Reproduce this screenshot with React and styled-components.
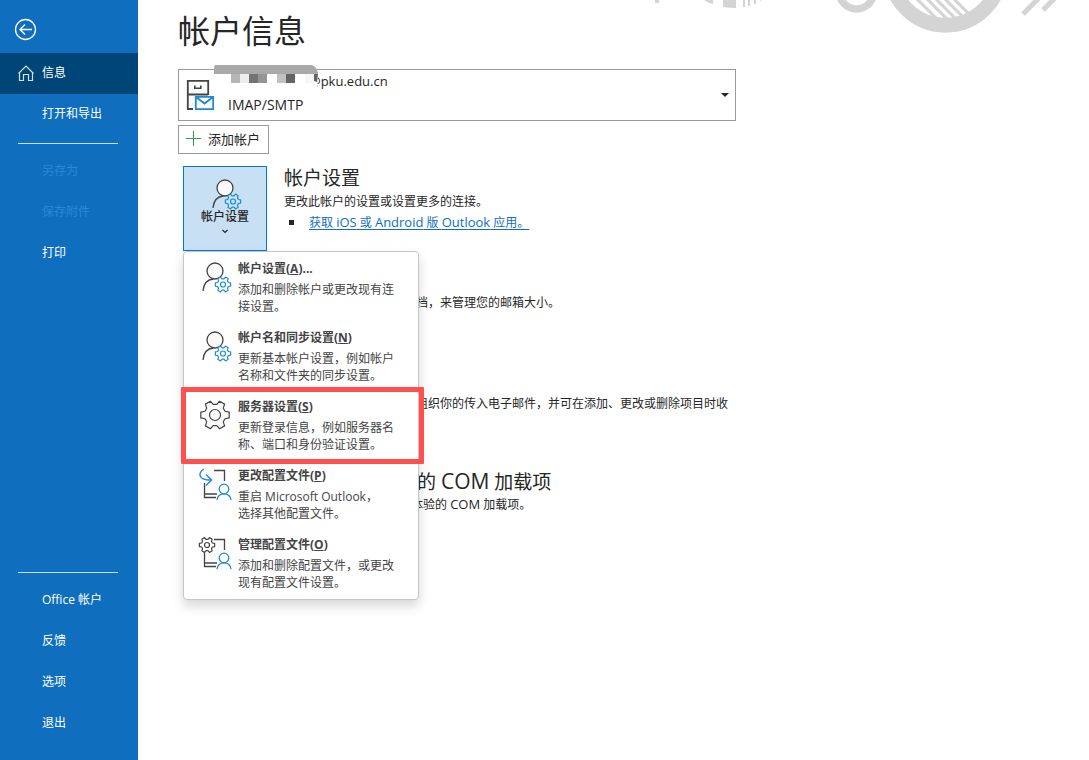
import React from 'react'
import styled, { createGlobalStyle, css } from 'styled-components'

const GlobalStyle = createGlobalStyle`
  * {
    box-sizing: border-box;
  }

  body {
    margin: 0;
    background: #fff;
    color: #262626;
    font-family: 'Open Sans', 'Noto Sans CJK SC', sans-serif;
    font-size: 12px;
    line-height: 17px;
  }

  button, select {
    font-family: inherit;
    color: inherit;
  }

  h1, h2, p, ul {
    margin: 0;
    padding: 0;
    font-weight: 400;
  }
`

const Page = styled.div`
  display: flex;
  min-height: 100vh;
`

const Sidebar = styled.nav`
  flex: 0 0 138px;
  display: flex;
  flex-direction: column;
  padding-bottom: 16px;
  background: #106ebe;
  color: #fff;
`

const BackButton = styled.button`
  align-self: flex-start;
  display: flex;
  height: 53px;
  padding: 18px 14px 0;
  background: none;
  border: none;
  color: #fff;
`

const NavItem = styled.button`
  display: flex;
  align-items: center;
  gap: ${({ $icon }) => ($icon ? '8px' : '4px')};
  height: 41px;
  padding: 0 0 2px ${({ $icon }) => ($icon ? '18px' : '42px')};
  background: ${({ $active }) => ($active ? '#004578' : 'none')};
  border: none;
  color: #fff;
  font-size: 12px;
  line-height: 17px;
  text-align: left;

  &:disabled {
    color: #2b88d8;
  }
`

const Divider = styled.hr`
  width: 100px;
  height: 1px;
  margin: 8px 0 7px 18px;
  border: none;
  background: #c7e0f4;
`

const NavFooter = styled.div`
  display: flex;
  flex-direction: column;
  margin-top: auto;
`

const Main = styled.main`
  position: relative;
  flex: 1;
  min-width: 0;
  padding: 9px 40px 40px;
`

const Decoration = styled.svg`
  position: absolute;
  top: 0;
  right: 0;
`

// latin words run one step larger than the chinese text around them
const Latin = styled.span`
  font-size: ${({ $size }) => $size || '13px'};
`

const Title = styled.h1`
  margin-bottom: 16px;
  font-size: 32px;
  line-height: 44px;
`

const AccountBox = styled.div`
  display: flex;
  align-items: center;
  max-width: 558px;
  height: 52px;
  padding: 0 6px 0 7px;
  border: 1px solid #999;
`

const AccountText = styled.div`
  flex: 1;
  display: flex;
  flex-direction: column;
  gap: 4px;
  margin-left: 14px;
  padding-bottom: 4px;
  font-size: 13px;
  line-height: 20px;
`

const Address = styled.label`
  position: relative;
  padding-left: 81px;
`

const Mask = styled.svg`
  position: absolute;
  left: -14px;
  top: -6px;
`

const AccountSelect = styled.select`
  appearance: none;
  height: 20px;
  padding: 0;
  background: none;
  border: none;
  font-size: 14px;
  line-height: 20px;
`

const AddButton = styled.button`
  display: flex;
  align-items: center;
  gap: 6px;
  height: 29px;
  margin: 4px 0 12px;
  padding: 0 8px 2px 7px;
  background: #fff;
  border: 1px solid #999;
  font-size: 13px;
  line-height: 20px;

  svg {
    margin-top: 1px;
  }
`

const Section = styled.section`
  display: flex;
  gap: 17px;
  height: 101px;
  padding-left: 5px;
`

const SectionTools = styled.div`
  position: relative;
  flex: 0 0 84px;
`

const SectionBody = styled.div`
  flex: 1;
  padding-left: ${({ $inset }) => $inset || 0};
  white-space: nowrap;
`

const SectionTitle = styled.h2`
  height: 27px;
  padding-left: ${({ $inset }) => $inset || 0};
  font-size: 19px;
  line-height: 24px;
`

const TileButton = styled.button`
  display: flex;
  flex-direction: column;
  align-items: center;
  width: 84px;
  height: 85px;
  padding: 12px 0 0;
  background: #c7e0f4;
  border: 1px solid #0078d7;
  font-size: 12px;
  font-weight: 500;
  line-height: 13px;
`

const LinkList = styled.ul`
  list-style: none;
  padding-left: 5px;

  li {
    display: flex;
    align-items: center;
    gap: 15px;
    height: 24px;
  }

  li::before {
    content: '';
    width: 5px;
    height: 5px;
    background: #262626;
  }

  a {
    color: #106ebe;
    text-underline-offset: 2px;
  }
`

const Menu = styled.div`
  position: absolute;
  z-index: 1;
  top: 85px;
  left: 0;
  width: 236px;
  padding: 1px 0;
  background: #fff;
  border: 1px solid #c6c6c6;
  border-radius: 4px;
  box-shadow: 0 6px 12px rgba(0, 0, 0, 0.16);
`

const MenuItem = styled.button`
  position: relative;
  display: flex;
  gap: 6px;
  width: 100%;
  height: 69px;
  padding: 7px 16px 7px 14px;
  background: none;
  border: none;
  color: #444;
  font-size: 12px;
  line-height: 17px;
  text-align: left;

  svg {
    flex: none;
  }

  ${({ $marked }) => $marked && css`
    &::after {
      content: '';
      position: absolute;
      inset: -4px -6px -4px -3px;
      border: 5px solid #ff5050;
      border-radius: 1px;
    }
  `}
`

const ItemText = styled.span`
  display: flex;
  flex-direction: column;
  gap: 4px;
  white-space: nowrap;

  strong {
    font-weight: 700;
  }
`

const ItemLine = styled.span`
  display: block;
  height: 17px;
`

const gearPath = (cx, cy, r) => {
  const points = []
  for (let i = 0; i < 6; i++) {
    const a = (i * Math.PI) / 3
    const steps = [[-0.36, 0.74], [-0.2, 1], [0.2, 1], [0.36, 0.74]]
    steps.forEach(([da, k]) => {
      points.push(`${(cx + Math.cos(a + da) * r * k).toFixed(2)} ${(cy + Math.sin(a + da) * r * k).toFixed(2)}`)
    })
  }
  return `M${points.join('L')}Z`
}

const Gear = ({ cx, cy, r, hole, color, fill = '#fff' }) => (
  <g stroke={color} fill={fill} strokeWidth='1.2' strokeLinejoin='round'>
    <path d={gearPath(cx, cy, r)} />
    <circle cx={cx} cy={cy} r={hole} />
  </g>
)

const PersonGearIcon = ({ top = 0, height = 34, fill = '#fff' }) => (
  <svg width='34' height={height} viewBox={`0 ${top} 34 ${height}`} aria-hidden='true'>
    <path d='M5 31c.6-7.5 4.5-11.5 10.5-12' fill='none' stroke='#444' strokeWidth='1.3' />
    <circle cx='17' cy='11' r='8' fill='#fafafa' stroke='#444' strokeWidth='1.3' />
    <Gear cx={25} cy={24.5} r={7.8} hole={2.5} color='#1e8bcd' fill={fill} />
  </svg>
)

const ServerGearIcon = () => (
  <svg width='34' height='34' viewBox='0 0 34 34' aria-hidden='true'>
    <Gear cx={17} cy={17} r={14.5} hole={5.5} color='#444' fill='#fafafa' />
  </svg>
)

const Profile = () => (
  <g fill='none' strokeWidth='1.3'>
    <path d='M9 6h17v19H6z' fill='#fafafa' />
    <path d='M16 3.5h10.5V14M6.5 16v14.5H18M6.5 27H19' stroke='#444' />
    <circle cx='26' cy='22' r='4.8' fill='#fff' stroke='#1e8bcd' />
    <path d='M19 33c.5-4 3-6.2 7-6.2s6.5 2.2 7 6.2' stroke='#1e8bcd' />
  </g>
)

const ChangeProfileIcon = () => (
  <svg width='34' height='36' viewBox='0 0 34 36' aria-hidden='true'>
    <Profile />
    <path d='M6 2C-.5 6.5.5 13 12.5 13M8 7.5l5.5 5.5L8 18.5' fill='none' stroke='#1e8bcd' strokeWidth='1.4' />
  </svg>
)

const ManageProfileIcon = () => (
  <svg width='34' height='36' viewBox='0 0 34 36' aria-hidden='true'>
    <Profile />
    <Gear cx={9} cy={9} r={7.8} hole={2.5} color='#444' />
  </svg>
)

const menuItems = [
  { title: '帐户设置', accel: 'A', tail: '...', lines: ['添加和删除帐户或更改现有连', '接设置。'], Icon: PersonGearIcon },
  { title: '帐户名和同步设置', accel: 'N', lines: ['更新基本帐户设置\uff0c例如帐户', '名称和文件夹的同步设置。'], Icon: PersonGearIcon },
  { title: '服务器设置', accel: 'S', lines: ['更新登录信息\uff0c例如服务器名', '称、端口和身份验证设置。'], Icon: ServerGearIcon, marked: true },
  { title: '更改配置文件', accel: 'P', lines: ['重启 Microsoft Outlook\uff0c', '选择其他配置文件。'], Icon: ChangeProfileIcon },
  { title: '管理配置文件', accel: 'O', lines: ['添加和删除配置文件\uff0c或更改', '现有配置文件设置。'], Icon: ManageProfileIcon },
]

const SettingsMenu = () => (
  <Menu role='menu'>
    {menuItems.map(({ title, accel, tail, lines, Icon, marked }) => (
      <MenuItem key={accel} role='menuitem' $marked={marked}>
        <Icon />
        <ItemText>
          <strong>{title}(<u>{accel}</u>){tail}</strong>
          <span>
            {lines.map((line, i) => <ItemLine key={i}>{line}</ItemLine>)}
          </span>
        </ItemText>
      </MenuItem>
    ))}
  </Menu>
)

const TopDecoration = () => (
  <Decoration width='440' height='34' viewBox='649 0 440 34' fill='none' stroke='#d4d4d4' aria-hidden='true'>
    <g fill='#d4d4d4' stroke='none'>
      <path d='M655 0h4v3h-4zM704 0h9v4q-5-1-9-4zM723 0h13v8q-7 0-13-1z' />
      <path d='M743 0h2v7h-2zM748 0h2v6h-2zM754 0h2v4h-2zM760 0h1v1h-1z' />
    </g>
    <circle cx='856.5' cy='-8.3' r='17.3' strokeWidth='7.4' />
    <circle cx='945.5' cy='-30' r='55.2' strokeWidth='15' />
    <path d='M911-7l26 26M921-7l26 26M930-7l26 26M939-7l26 26M948-7l26 26' strokeWidth='3' />
    <path d='M1023 14l17-17M1043 10l14-14' strokeWidth='5' />
  </Decoration>
)

const App = () => {
  return (
    <Page>
      <GlobalStyle />
      <Sidebar>
        <BackButton aria-label='返回'>
          <svg width='23' height='23' viewBox='0 0 23 23' fill='none' stroke='currentColor' strokeWidth='1.3'>
            <circle cx='11.5' cy='11.5' r='10' />
            <path d='M18 11.5H6.5M11 6.5l-5 5 5 5' />
          </svg>
        </BackButton>
        <NavItem $active $icon>
          <svg width='16' height='18' viewBox='0 0 16 18' fill='none' stroke='#dcdcdc' strokeWidth='1.2'>
            <path d='M.5 9.5L8 2l7.5 7.5M1.5 8.5v8h4v-6h5v6h4v-8' />
          </svg>
          信息
        </NavItem>
        <NavItem>打开和导出</NavItem>
        <Divider />
        <NavItem disabled>另存为</NavItem>
        <NavItem disabled>保存附件</NavItem>
        <NavItem>打印</NavItem>
        <NavFooter>
          <Divider />
          <NavItem>Office 帐户</NavItem>
          <NavItem>反馈</NavItem>
          <NavItem>选项</NavItem>
          <NavItem>退出</NavItem>
        </NavFooter>
      </Sidebar>

      <Main>
        <TopDecoration />
        <Title>帐户信息</Title>
        <AccountBox>
          <svg width='28' height='32' viewBox='0 0 28 32' fill='none' aria-hidden='true'>
            <path d='M7 30H1.8V1.8h20.4V16M1.8 15.5h20.4' stroke='#444' strokeWidth='1.8' fill='#fafafa' />
            <path d='M8.8 6.5v2.7h6V6.5' stroke='#444' strokeWidth='1.6' />
            <path d='M9.8 17.8h17.4v12.4H9.8zM10 18l8.5 6.5L27 18' stroke='#1e8bcd' strokeWidth='1.8' fill='#fafafa' />
          </svg>
          <AccountText>
            <Address htmlFor='account'>
              @pku.edu.cn
              <Mask width='106' height='24' viewBox='214 65 106 24' aria-hidden='true'>
                <path d='M228 70h89q1 2 1 6l-1 12h-89z' fill='#fff' />
                <path d='M215 65h97q4 1 6 8v1H214v-7z' fill='#a9a9a9' />
                <path d='M231 74h9v9h-9z' fill='#b6b6b6' />
                <path d='M240 74h9v9h-9z' fill='#ededed' />
                <path d='M249 74h9v9h-9z' fill='#747474' />
                <path d='M258 74h9v9h-9z' fill='#959595' />
                <path d='M277 74h9v9h-9z' fill='#c1c1c1' />
                <path d='M286 74h9v9h-9z' fill='#646464' />
                <path d='M305 74h9v9h-9z' fill='#f7f7f7' />
                <path d='M314 74h4l-1 8-3-1z' fill='#646464' />
              </Mask>
            </Address>
            <AccountSelect id='account'>
              <option>IMAP/SMTP</option>
            </AccountSelect>
          </AccountText>
          <svg width='8' height='4' viewBox='0 0 8 4' aria-hidden='true'>
            <path d='M0 0h8L4 4z' fill='#262626' />
          </svg>
        </AccountBox>
        <AddButton>
          <svg width='16' height='16' viewBox='0 0 16 16' shapeRendering='crispEdges' aria-hidden='true'>
            <path d='M7 0h1v7h7v1H8v7H7V8H0V7h7z' fill='#2f9e4f' />
          </svg>
          添加帐户
        </AddButton>

        <Section>
          <SectionTools>
            <TileButton aria-haspopup='menu' aria-expanded='true'>
              <PersonGearIcon top={2} height={31} fill='#c7e0f4' />
              帐户设置
              <svg width='6' height='16' viewBox='0 0 6 16' fill='none' aria-hidden='true'>
                <path d='M.5 7L3 9.5 5.5 7' stroke='#262626' strokeWidth='1.2' />
              </svg>
            </TileButton>
            <SettingsMenu />
          </SectionTools>
          <SectionBody>
            <SectionTitle>帐户设置</SectionTitle>
            <p>更改此帐户的设置或设置更多的连接。</p>
            <LinkList>
              <li>
                <a href='#mobile'>
                  获取 <Latin>iOS</Latin> 或 <Latin>Android</Latin> 版 <Latin>Outlook</Latin> 应用。
                </a>
              </li>
            </LinkList>
          </SectionBody>
        </Section>
        <Section>
          <SectionTools />
          <SectionBody $inset='132px'>
            <SectionTitle />
            <p>{'档\uff0c来管理您的邮箱大小。'}</p>
          </SectionBody>
        </Section>
        <Section>
          <SectionTools />
          <SectionBody $inset='132px'>
            <SectionTitle />
            <p>{'组织你的传入电子邮件\uff0c并可在添加、更改或删除项目时收'}</p>
          </SectionBody>
        </Section>
        <Section>
          <SectionTools />
          <SectionBody $inset='127px'>
            <SectionTitle $inset='6px'>的 <Latin $size='21px'>COM</Latin> 加载项</SectionTitle>
            <p>体验的 <Latin>COM</Latin> 加载项。</p>
          </SectionBody>
        </Section>
      </Main>
    </Page>
  )
}

export default App
